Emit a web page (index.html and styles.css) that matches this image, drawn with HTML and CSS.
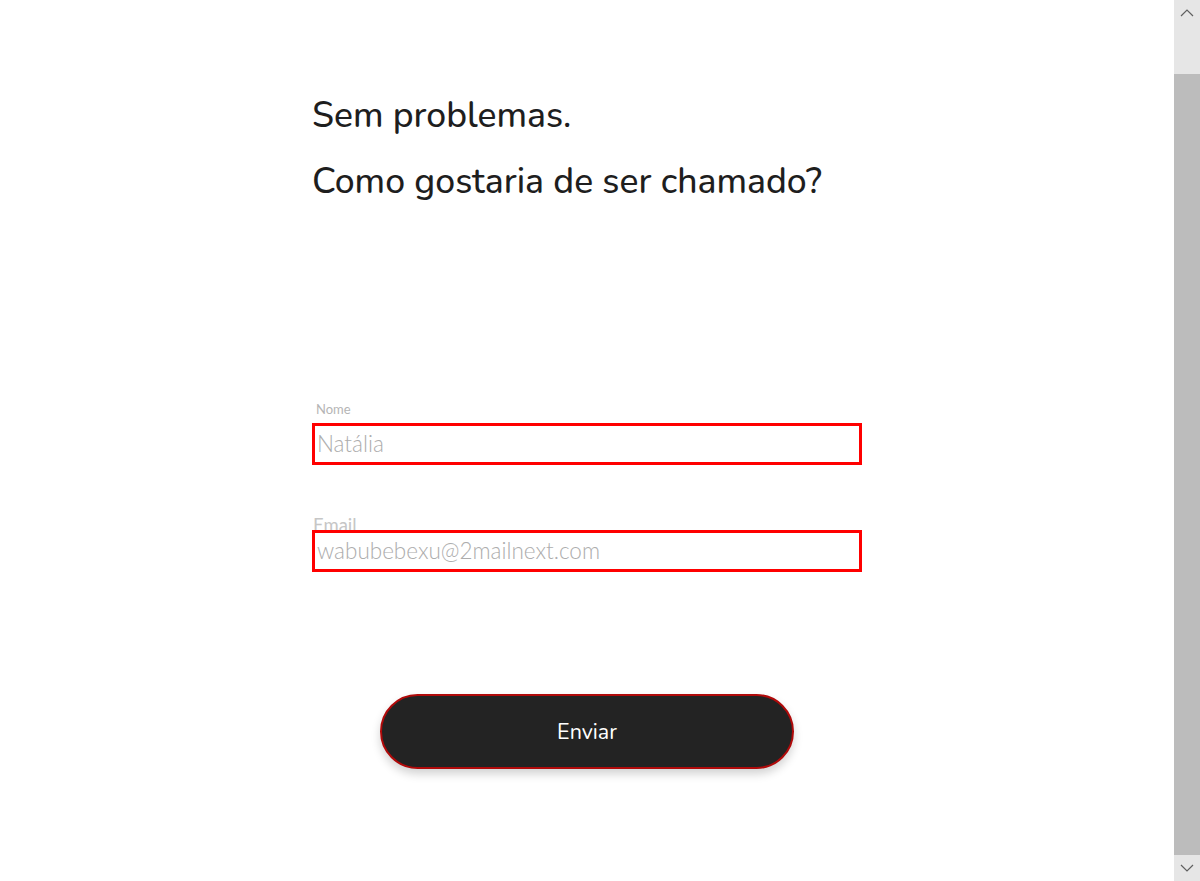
FILE: index.html
```html
<!DOCTYPE html>
<html lang="pt">
<head>
<meta charset="utf-8">
<title>Cadastro</title>
<link rel="stylesheet" href="styles.css">
</head>
<body>
<main class="page">
  <section class="form-wrap">
    <h1 class="title">Sem problemas.</h1>
    <h1 class="title second">Como gostaria de ser chamado?</h1>
    <div class="field field-nome">
      <label class="label-small">Nome</label>
      <div class="input">Natália</div>
    </div>
    <div class="field field-email">
      <label class="label-big">Email</label>
      <div class="input">wabubebexu@2mailnext.com</div>
    </div>
    <div class="actions">
      <button class="btn">Enviar</button>
    </div>
  </section>
</main>
<div class="scrollbar">
  <div class="sb-btn sb-up"><svg width="14" height="8" viewBox="0 0 14 8"><path d="M1 7 L7 1 L13 7" fill="none" stroke="#606060" stroke-width="1.2"/></svg></div>
  <div class="sb-thumb"></div>
  <div class="sb-btn sb-down"><svg width="14" height="8" viewBox="0 0 14 8"><path d="M1 1 L7 7 L13 1" fill="none" stroke="#606060" stroke-width="1.2"/></svg></div>
</div>
</body>
</html>
```

FILE: styles.css
```css
html, body {
  margin: 0;
  padding: 0;
  height: 100%;
  overflow: hidden;
  background: #fff;
}
body {
  font-family: "Lato", "Open Sans", sans-serif;
  color: #222;
}
.page {
  display: flex;
  justify-content: flex-start;
  padding-left: 312px;
  padding-top: 94px;
}
.form-wrap {
  width: 550px;
  display: flex;
  flex-direction: column;
}
.title {
  font-family: "Nunito", "Lato", sans-serif;
  font-weight: 500;
  font-size: 35.5px;
  line-height: 44px;
  margin: 0;
  color: #1e1e1e;
}
.second {
  margin-top: 22px;
}
.field {
  display: flex;
  flex-direction: column;
}
.field-nome {
  margin-top: 197px;
}
.label-small {
  font-size: 13px;
  line-height: 16px;
  color: #b5b5b5;
  margin-left: 4px;
  margin-bottom: 6px;
}
.field-email {
  margin-top: 49px;
}
.label-big {
  font-size: 18.5px;
  line-height: 22px;
  color: #c6c6c6;
  margin-left: 1px;
  margin-bottom: -6px;
}
.input {
  box-sizing: border-box;
  height: 42px;
  border: 3px solid #ff0000;
  padding: 0 2px;
  font-size: 22.5px;
  line-height: 36px;
  color: #adadad;
  font-weight: 300;
}
.actions {
  display: flex;
  justify-content: center;
  margin-top: 122px;
}
.btn {
  width: 414px;
  height: 75px;
  border-radius: 38px;
  background: #232323;
  border: 2px solid #b00a0a;
  color: #fff;
  font-family: "Nunito", "Lato", sans-serif;
  font-size: 21.5px;
  box-shadow: 0 5px 10px rgba(0,0,0,0.18);
}
.scrollbar {
  position: absolute;
  top: 0;
  right: 0;
  width: 26px;
  height: 881px;
  background: #e6e6e6;
  display: flex;
  flex-direction: column;
}
.sb-btn {
  height: 26px;
  display: flex;
  align-items: center;
  justify-content: center;
}
.sb-up {
  height: 74px;
  align-items: flex-start;
}
.sb-up svg {
  margin-top: 9px;
}
.sb-thumb {
  flex: 1;
  background: #bcbcbc;
}
```
